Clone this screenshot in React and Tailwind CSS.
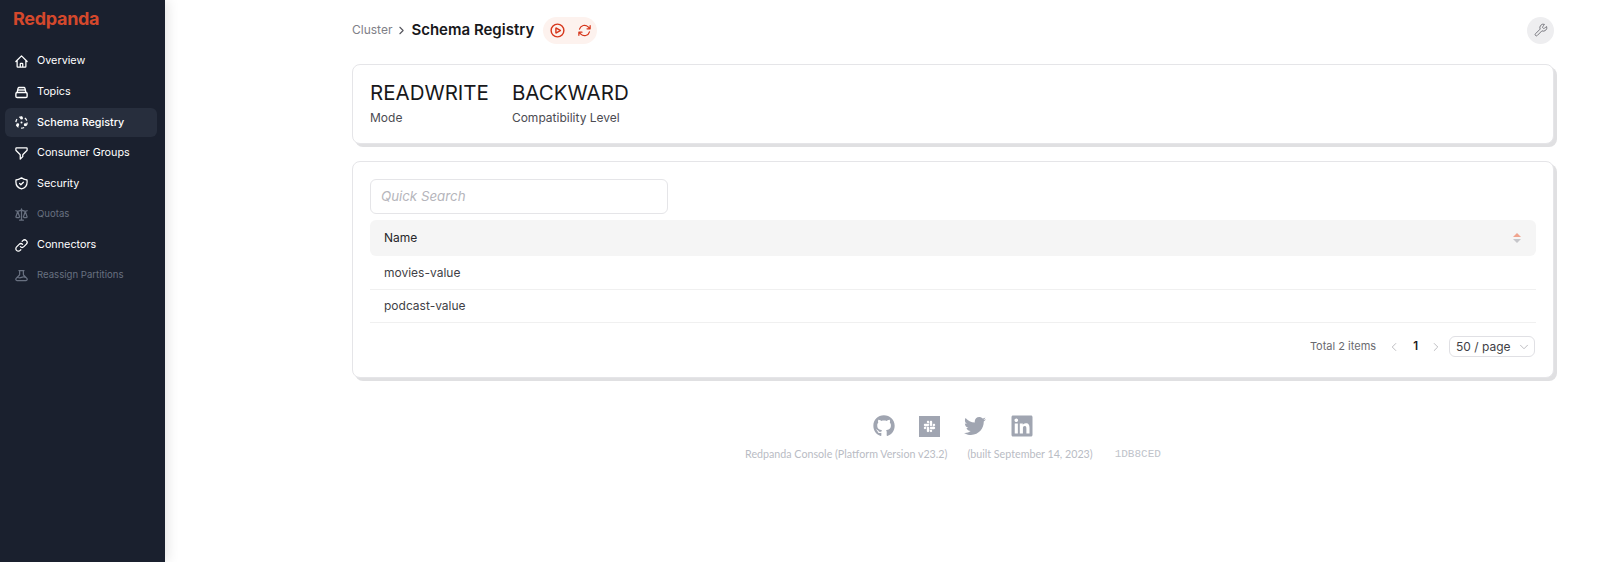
import { FaGithub, FaSlack, FaTwitter, FaLinkedin } from 'react-icons/fa';
import { HiOutlineHome, HiOutlineShieldCheck, HiOutlineScale, HiOutlineLink, HiOutlineBeaker, HiOutlineFilter } from 'react-icons/hi';
import { HiOutlinePlayCircle, HiOutlineArrowPath } from 'react-icons/hi2';
import { ChevronRight, ChevronLeft, ChevronDown, Wrench } from 'lucide-react';

// topics icon: stacked tray
function TopicsIcon({ className }) {
  return (
    <svg viewBox="0 0 24 24" fill="none" stroke="currentColor" strokeWidth="2.2" className={className}>
      <rect x="3" y="12" width="18" height="8" rx="2" />
      <path d="M5 12l1.6-7a1.5 1.5 0 0 1 1.4-1h8a1.5 1.5 0 0 1 1.4 1L19 12" />
      <path d="M6 8h12" />
    </svg>
  );
}

function SchemaIcon({ className }) {
  return (
    <svg viewBox="0 0 24 24" fill="none" stroke="currentColor" strokeWidth="2" className={className}>
      <circle cx="12" cy="12" r="9" strokeDasharray="5 4.4" />
      <circle cx="12" cy="5" r="1.3" fill="currentColor" />
      <circle cx="6" cy="15.5" r="1.3" fill="currentColor" />
      <circle cx="18" cy="15.5" r="1.3" fill="currentColor" />
      <circle cx="12" cy="12" r="1.6" fill="currentColor" stroke="none" />
    </svg>
  );
}

const navItems = [
  { label: 'Overview', icon: HiOutlineHome },
  { label: 'Topics', icon: TopicsIcon },
  { label: 'Schema Registry', icon: SchemaIcon, active: true },
  { label: 'Consumer Groups', icon: HiOutlineFilter },
  { label: 'Security', icon: HiOutlineShieldCheck },
  { label: 'Quotas', icon: HiOutlineScale, disabled: true },
  { label: 'Connectors', icon: HiOutlineLink },
  { label: 'Reassign Partitions', icon: HiOutlineBeaker, disabled: true },
];

function Sidebar() {
  return (
    <aside className="w-[165px] shrink-0 bg-[#1a202e] shadow-[2px_0_12px_rgba(0,0,0,0.12)] pl-[5px] pr-[8px]">
      <div className="h-[47px] pl-[8px] pt-[6px] text-[18px] leading-[26px] font-bold tracking-[-0.3px] text-[#d4482c]">Redpanda</div>
      <nav className="flex flex-col gap-[1.6px]">
        {navItems.map((item) => {
          const Icon = item.icon;
          return (
            <div
              key={item.label}
              className={`h-[29px] flex items-center pl-[9px] rounded-md ${item.active ? 'bg-[#272e3d] text-white' : ''} ${item.disabled ? 'text-[#687080]' : 'text-white'}`}
            >
              <Icon className="w-[15px] h-[15px] shrink-0" />
              <span className={`ml-[8px] whitespace-nowrap ${item.disabled ? 'text-[9.6px]' : 'text-[10.8px]'} ${item.active ? 'font-medium' : 'font-normal'}`}>{item.label}</span>
            </div>
          );
        })}
      </nav>
    </aside>
  );
}

function Card({ className, children }) {
  return (
    <div className={`bg-white rounded-lg border border-[#e5e5e8] shadow-[3px_3px_0_#e0e0e2] ${className}`}>
      {children}
    </div>
  );
}

function Stat({ value, label }) {
  return (
    <div className="flex flex-col">
      <div className="text-[20.5px] leading-[28px] text-[#18181b]">{value}</div>
      <div className="text-[12px] leading-[16px] mt-[3px] text-[#4b4b52]">{label}</div>
    </div>
  );
}

export default function App() {
  return (
    <div className="flex h-[562px] w-[1600px] overflow-hidden bg-white font-['Inter',sans-serif]">
      <Sidebar />
      <main className="flex-1 pl-[187px] pr-[46px]">
        <header className="h-[64px] flex items-center pb-[4px]">
          <span className="text-[12px] text-[#808087]">Cluster</span>
          <ChevronRight className="w-[13px] h-[13px] mx-[3px] text-[#55555c]" />
          <span className="text-[15px] font-semibold text-[#18181b]">Schema Registry</span>
          <div className="ml-[9px] h-[27px] w-[54px] rounded-full bg-[#fdf2ee] flex items-center justify-center gap-[11px] text-[#d6361b]">
            <HiOutlinePlayCircle className="w-[17px] h-[17px] stroke-2" />
            <HiOutlineArrowPath className="w-[15px] h-[15px] stroke-2" />
          </div>
          <div className="ml-auto w-[27px] h-[27px] rounded-full bg-[#eeeef0] flex items-center justify-center text-[#77777e]">
            <Wrench className="w-[14px] h-[14px]" strokeWidth={1.7} />
          </div>
        </header>

        <Card className="h-[80px] pl-[17px] pt-[14px] flex gap-[23px]">
          <Stat value="READWRITE" label="Mode" />
          <Stat value="BACKWARD" label="Compatibility Level" />
        </Card>

        <Card className="mt-[17px] h-[217px] px-[17px] pt-[17px]">
          <div className="w-[298px] h-[35px] rounded-md border border-[#e5e5e8] flex items-center pl-[10px] text-[13.3px] italic text-[#b5b5bb]">
            Quick Search
          </div>
          <div className="mt-[6px] h-[36px] rounded-md bg-[#f5f5f5] flex items-center justify-between pl-[14px] pr-[15px] text-[12px] font-normal text-[#27272a]">
            <span>Name</span>
            <span className="flex flex-col gap-[2px]">
              <span className="w-0 h-0 border-x-[4px] border-x-transparent border-b-[4px] border-b-[#f0a48e]" />
              <span className="w-0 h-0 border-x-[4px] border-x-transparent border-t-[4px] border-t-[#c6c6ca]" />
            </span>
          </div>
          {['movies-value', 'podcast-value'].map((name) => (
            <div key={name} className="h-[33.5px] pt-[1px] flex items-center pl-[14px] border-b border-[#f0f0f0] text-[12px] text-[#3f3f46]">
              {name}
            </div>
          ))}
          <div className="mt-[13px] pr-[1px] flex items-center justify-end text-[11px] text-[#6a6a70]">
            <span className="-mt-[1px]">Total 2 items</span>
            <ChevronLeft className="ml-[11px] w-[14px] h-[14px] text-[#b4b4b8]" strokeWidth={1.5} />
            <span className="ml-[12px] mr-[11px] text-[11.5px] font-semibold text-[#18181b]">1</span>
            <ChevronRight className="w-[14px] h-[14px] text-[#b4b4b8]" strokeWidth={1.5} />
            <div className="ml-[6px] w-[86px] h-[21px] rounded-md border border-[#e0e0e4] flex items-center pl-[6px] text-[12px] text-[#3f3f46]">
              50 / page
              <ChevronDown className="ml-[6px] w-[14px] h-[14px] text-[#b4b4b8]" strokeWidth={1.5} />
            </div>
          </div>
        </Card>

        <footer className="mt-[36px] flex flex-col items-center">
          <div className="flex items-center gap-[24px] text-[#a0a5b1]">
            <FaGithub className="w-[22px] h-[22px]" />
            <div className="w-[21px] h-[21px] bg-[#a0a5b1] flex items-center justify-center text-white">
              <FaSlack className="w-[13px] h-[13px]" />
            </div>
            <FaTwitter className="w-[22px] h-[22px]" />
            <FaLinkedin className="w-[24px] h-[24px]" />
          </div>
          <div className="mt-[8px] flex items-center text-[10.7px] font-normal text-[#b9bcc4] font-['Lato',sans-serif]">
            <span>Redpanda Console (Platform Version v23.2)</span>
            <span className="ml-[20px]">(built September 14, 2023)</span>
            <span className="ml-[22px] font-['Liberation_Mono',monospace] text-[11px] text-[#c0c3ca]">1DB8CED</span>
          </div>
        </footer>
      </main>
    </div>
  );
}
